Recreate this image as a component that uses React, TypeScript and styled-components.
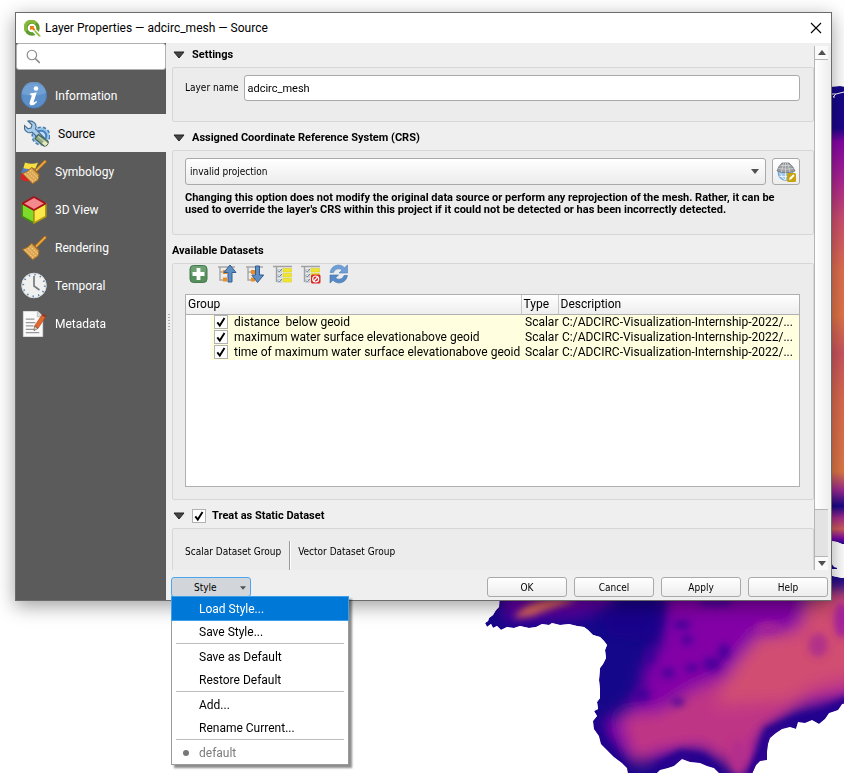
import React, { useState } from 'react';
import styled, { createGlobalStyle, css } from 'styled-components';

const UI = "Roboto, 'Noto Sans', sans-serif";
const SMALL = "'DejaVu Sans Condensed', 'DejaVu Sans', sans-serif";

const GlobalStyle = createGlobalStyle`
  *, *::before, *::after { box-sizing: border-box; }
  body { margin: 0; background: #fff; color: #000; font: 12px/16px ${UI}; }
  button, input, select { font: inherit; color: inherit; margin: 0; }
`;

/* ---------- window frame ---------- */

const Page = styled.div`
  position: relative;
  height: 100vh;
  min-height: 500px;
  overflow: hidden;
  padding: 12px 12px 172px 15px;
`;

const MapCanvas = styled.svg`
  position: absolute;
  inset: 0;
  width: 100%;
  height: 100%;
`;

const Dialog = styled.main`
  position: relative;
  display: flex;
  flex-direction: column;
  height: 100%;
  background: #efefef;
  border: 1px solid #6b6b6b;
  box-shadow: 0 5px 18px rgba(0, 0, 0, 0.38);
`;

const TitleBar = styled.header`
  display: flex;
  align-items: center;
  flex: none;
  height: 30px;
  padding: 0 8px;
  gap: 4px;
  background: #fff;
`;

const Title = styled.h1`
  flex: 1;
  margin: 0;
  font-size: 12px;
  font-weight: 400;
`;

const CloseButton = styled.button`
  display: flex;
  padding: 1px;
  border: 0;
  background: none;
`;

const Body = styled.div`
  display: flex;
  flex: 1;
  min-height: 0;
`;

/* ---------- sidebar ---------- */

const Sidebar = styled.nav`
  flex: none;
  width: 150px;
  background: #5b5b5b;
`;

const SearchBox = styled.label`
  display: flex;
  align-items: center;
  height: 27px;
  margin-bottom: 6px;
  padding: 0 9px;
  gap: 6px;
  background: #fff;
  border: 1px solid #b0b0b0;
  border-radius: 3px;
`;

const SearchInput = styled.input`
  width: 100%;
  min-width: 0;
  border: 0;
  outline: 0;
  background: transparent;
`;

const NavItem = styled.button<{ $active?: boolean }>`
  display: flex;
  align-items: center;
  gap: 8px;
  width: 100%;
  height: 38px;
  padding: 2px 0 0 ${p => (p.$active ? 8 : 5)}px;
  border: 0;
  text-align: left;
  background: ${p => (p.$active ? '#efefef' : 'transparent')};
  color: ${p => (p.$active ? '#000' : '#fff')};
`;

/* ---------- content ---------- */

const Main = styled.div`
  display: flex;
  flex-direction: column;
  flex: 1;
  min-width: 0;
`;

const ScrollArea = styled.div`
  display: flex;
  flex: 1;
  min-height: 0;
  margin-right: 3px;
`;

const Splitter = styled.div`
  flex: none;
  align-self: center;
  width: 2px;
  height: 17px;
  margin: 32px 2px 0;
  background: repeating-linear-gradient(#b0b0b0 0 1px, transparent 1px 3px);
`;

const Content = styled.div`
  flex: 1;
  min-width: 0;
  overflow: hidden;
  font: 10px/12px ${SMALL};
`;

const GroupTitle = styled.h2<{ $flush?: boolean }>`
  display: flex;
  align-items: center;
  gap: 7px;
  height: ${p => (p.$flush ? 28 : 24)}px;
  margin: 0;
  padding: ${p => (p.$flush ? '4px 0 0' : '0 0 0 1px')};
  font: 700 11px/14px ${UI};
`;

const GroupBox = styled.section<{ $height: number; $after?: number; $tight?: boolean }>`
  height: ${p => p.$height}px;
  margin-bottom: ${p => p.$after ?? 0}px;
  padding: ${p => (p.$tight ? 0 : 7)}px 13px 0 12px;
  background: #ececec;
  border: 1px solid #d6d6d6;
  border-radius: 2px;
`;

const FieldRow = styled.div`
  display: flex;
  align-items: center;
  gap: 6px;
`;

const TextInput = styled.input`
  flex: 1;
  min-width: 0;
  height: 26px;
  padding: 0 2px;
  font: 11px/18px ${UI};
  background: #fff;
  border: 1px solid #a9a9a9;
  border-radius: 3px;
`;

const SelectWrap = styled.div`
  position: relative;
  display: flex;
  flex: 1;
`;

const Select = styled.select`
  width: 100%;
  height: 27px;
  padding: 0 4px;
  appearance: none;
  background: linear-gradient(#fff, #ececec);
  border: 1px solid #a9a9a9;
  border-radius: 3px;
`;

const SelectArrow = styled.span`
  position: absolute;
  right: 7px;
  top: 11px;
  display: flex;
  pointer-events: none;
`;

const IconButton = styled.button`
  display: flex;
  align-items: center;
  justify-content: center;
  width: 28px;
  height: 27px;
  padding: 0;
  background: linear-gradient(#fff, #ededed);
  border: 1px solid #a9a9a9;
  border-radius: 3px;
`;

const Note = styled.p`
  margin: 7px 0 0;
  font: 700 11px/12px ${UI};
`;

const Toolbar = styled.div`
  display: flex;
  gap: 8px;
  height: 30px;
  padding-left: 4px;
`;

const ToolButton = styled.button`
  display: flex;
  width: 20px;
  height: 20px;
  padding: 0;
  border: 0;
  background: none;
`;

const TableFrame = styled.div`
  height: 193px;
  background: #fff;
  border: 1px solid #b0b0b0;
  overflow: hidden;
`;

const Table = styled.table`
  width: 100%;
  table-layout: fixed;
  border-collapse: collapse;
  font: 12px/15px ${UI};
`;

const HeadCell = styled.th<{ $width?: number }>`
  width: ${p => (p.$width ? `${p.$width}px` : 'auto')};
  height: 19px;
  padding: 0 2px;
  font-weight: 400;
  text-align: left;
  background: linear-gradient(#fff, #ededed);
  border-bottom: 1px solid #b0b0b0;
  & + & { border-left: 1px solid #c8c8c8; }
`;

const Cell = styled.td<{ $tree?: boolean }>`
  height: 15px;
  padding: ${p => (p.$tree ? '0 0 0 25px' : '0 0 0 4px')};
  white-space: pre;
  background: ${p => (p.$tree ? 'linear-gradient(to right, #fff 25px, #ffffdf 25px)' : '#ffffdf')};
`;

const CheckLabel = styled.label<{ $indent?: number }>`
  display: flex;
  align-items: center;
  gap: 6px;
  padding-left: ${p => p.$indent ?? 0}px;
`;

const Check = styled.input`
  appearance: none;
  flex: none;
  width: 14px;
  height: 14px;
  background: #fff;
  border: 1px solid #b2b2b2;
  &:checked {
    background: #fff url("data:image/svg+xml,%3Csvg xmlns='http://www.w3.org/2000/svg' viewBox='0 0 12 12'%3E%3Cpath d='M2.3 6.3 4.8 9.5 9.5 2' fill='none' stroke='%23000' stroke-width='1.9'/%3E%3C/svg%3E") center / 12px 12px no-repeat;
  }
`;

const DatasetColumns = styled.div`
  display: flex;
  height: 60px;
  margin-top: 5px;
`;

const DatasetColumn = styled.div`
  padding: 5px 8px 0 0;
  & + & { padding-left: 8px; border-left: 1px solid #9a9a9a; box-shadow: inset 1px 0 #fff; }
`;

/* ---------- scroll bar ---------- */

const ScrollBar = styled.div`
  display: flex;
  flex-direction: column;
  flex: none;
  width: 14px;
  margin-top: 3px;
  background: #e3e3e3;
  border-left: 1px solid #b5b5b5;
`;

const ScrollArrow = styled.button`
  display: flex;
  align-items: center;
  justify-content: center;
  flex: none;
  width: 100%;
  height: 13px;
  padding: 0;
  border: 0;
  background: #fafafa;
`;

const ScrollTrack = styled.div`
  flex: 1;
  padding-bottom: 46px;
  border-bottom: 1px solid #b5b5b5;
`;

const ScrollThumb = styled.div`
  height: 100%;
  background: linear-gradient(to right, #fff, #f0f0f0);
  border: solid #b5b5b5;
  border-width: 1px 0;
`;

/* ---------- footer ---------- */

const Footer = styled.footer`
  display: flex;
  flex: none;
  gap: 7px;
  padding: 7px 3px 3px 5px;
  font: 10px/12px ${SMALL};
`;

const pushButton = css`
  width: 80px;
  height: 20px;
  padding: 1px 0 0;
  border-radius: 3px;
`;

const PushButton = styled.button`
  ${pushButton}
  background: linear-gradient(#fff, #ededed);
  border: 1px solid #a9a9a9;
`;

const MenuAnchor = styled.div`
  position: relative;
  margin-right: auto;
`;

const StyleButton = styled.button`
  ${pushButton}
  display: flex;
  align-items: center;
  padding: 1px 4px 0 22px;
  justify-content: space-between;
  background: #d2d6da;
  border: 1px solid #4da6f0;
`;

const Menu = styled.div`
  position: absolute;
  z-index: 2;
  top: 19px;
  left: 0;
  width: 178px;
  background: #fff;
  border: 1px solid #9b9b9b;
  box-shadow: 3px 3px 2px rgba(0, 0, 0, 0.45);
  font: 12px/16px ${UI};
`;

const MenuItem = styled.button<{ $active?: boolean }>`
  display: flex;
  align-items: center;
  width: 100%;
  height: 23px;
  padding: 0;
  border: 0;
  text-align: left;
  color: ${p => (p.$active ? '#fff' : '#000')};
  background: ${p => (p.$active ? '#0078d7' : 'transparent')};
  box-shadow: ${p => (p.$active ? '0 0 0 1px #3f9fe8' : 'none')};
  &:disabled { color: #7b7b7b; }
`;

const MenuMark = styled.span`
  display: flex;
  justify-content: center;
  width: 27px;
`;

const MenuRule = styled.hr`
  height: 2px;
  margin: 0 4px;
  border: 0;
  border-top: 1px solid #bdbdbd;
`;

/* ---------- icons ---------- */

const Triangle = ({ size = 9, up = false, color = '#505050' }: { size?: number; up?: boolean; color?: string }) => (
  <svg width={size} height={Math.round(size * 0.6)} viewBox="0 0 10 6">
    <path d={up ? 'M0 6h10L5 0z' : 'M0 0h10L5 6z'} fill={color} />
  </svg>
);

const Collapse = () => (
  <svg width="12" height="8" viewBox="0 0 12 8">
    <path d="M1 1h10L6 7z" fill="#454545" stroke="#222" />
  </svg>
);

const QgisLogo = () => (
  <svg width="17" height="17" viewBox="0 0 17 17">
    <circle cx="8" cy="8" r="6" fill="none" stroke="#5e9b2c" strokeWidth="3.4" />
    <path d="M2.5 11A6 6 0 0 1 12 3.5" fill="none" stroke="#86b83b" strokeWidth="3.2" />
    <path d="M9.5 9.5 14.5 15" stroke="#fff" strokeWidth="4.5" />
    <path d="M10.5 11.5v-2l6 6V16.5h-1.8z" fill="#8fbd38" />
    <path d="M6 6h4.2L9.6 7.6l1.7 2-1.4 1.2-2-1.7L6 10z" fill="#ee7913" />
  </svg>
);

const SearchIcon = () => (
  <svg width="17" height="17" viewBox="0 0 16 16" fill="none" stroke="#888">
    <circle cx="6.6" cy="6.3" r="5.3" strokeWidth="1.3" />
    <path d="m10.4 10.2 5 5" strokeWidth="1.8" />
  </svg>
);

const InfoIcon = () => (
  <svg width="26" height="28" viewBox="0 0 26 28">
    <circle cx="13" cy="13.5" r="12.6" fill="#5b8fc9" stroke="#4a7db8" />
    <path d="M1 12a12 12 0 0 1 24-1Q14 16 1 12z" fill="#79a7d8" opacity=".7" />
    <circle cx="15" cy="6.5" r="2.3" fill="#fff" />
    <path d="M9 11.4q3.5-.3 6.7-1.2l-3 9.8q-.3 1.4 2.7-.9l.7.8q-3.5 4-6.2 3.3-2-.6-1-3.7l1.7-5.3q.5-1.5-1.9-1.6z" fill="#fff" />
  </svg>
);

const SourceIcon = () => (
  <svg width="26" height="28" viewBox="0 0 26 28">
    <circle cx="17" cy="16" r="8.5" fill="#8fbbe4" stroke="#4a7dae" strokeWidth="2.2" strokeDasharray="3.2 2" />
    <circle cx="17" cy="16" r="8" fill="#9dc6ea" />
    <circle cx="17" cy="16" r="5.3" fill="#c5dff5" stroke="#4581c0" strokeWidth="2" />
    <path d="m4 1 4 4-1 3-3 .7L.6 5.5Q-.4 11 4.2 12.5q2 .6 4-.4l9 8.7 3-3-8.7-8.8q1.4-3-.7-5.8Q7.7.3 4 1z" fill="#a9cdec" stroke="#466b8d" strokeWidth="1.1" />
    <path d="m14.4 14.5 8.8 6.3q2 1.5 0 3.9t-4 .8l-8.2-6.8z" fill="#8fab8a" stroke="#47614d" strokeWidth="1.1" />
    <path d="m14 16.3 6 4.6M20.5 21l3 2.5-2.2 2.2-3-2.5z" stroke="#dce8bf" fill="#eceabf" strokeWidth=".8" />
  </svg>
);

const Broom = ({ flag = false }: { flag?: boolean }) => (
  <svg width="26" height="26" viewBox="1 1 26 26">
    {flag && (
      <g>
        <path d="M5 4.5q7 2.5 13 0l-3 7q-6 2-12 0z" fill="#f7df3f" />
        <path d="M3 10q6 2 12 0l-3 6q-6 1-11-1z" fill="#537dbb" />
        <path d="M1.5 15q5 2 11 1l-2 7q-6 1-10.5-2z" fill="#dc2222" />
      </g>
    )}
    <path d="M16.5 12 25 3.5" stroke="#98601c" strokeWidth="3.4" strokeLinecap="round" />
    <path d="M16.5 12 25 3.5" stroke="#eaa63e" strokeWidth="2" strokeLinecap="round" />
    <path d="M11.5 9.5 19 17l-1 5-5.5 3.7L2.5 15.5q5-1.2 9-6z" fill="#dba450" stroke="#a66d24" />
    <path d="m5 15.5 8.7 8.5m-6-10 8.3 8.2m-6-10 8 7.8" stroke="#f2cd87" strokeWidth="1.1" strokeDasharray="1.5 1" />
    <path d="m12 9.7 7 7" stroke="#a9712a" strokeWidth="1.2" />
  </svg>
);

const CubeIcon = () => (
  <svg width="26" height="28" viewBox="0 0 26 28" strokeLinejoin="round" strokeWidth="1.6">
    <path d="M1.2 7.5 13 14v13L1.2 20.5z" fill="#7edb2c" stroke="#478d12" />
    <path d="M24.8 7.5 13 14v13l11.8-6.5z" fill="#fbe94a" stroke="#b39a11" />
    <path d="M13 1 24.5 7.5 13 14 1.5 7.5z" fill="#f38a8d" stroke="#a80f18" />
  </svg>
);

const ClockIcon = () => (
  <svg width="26" height="28" viewBox="0 0 26 28">
    <circle cx="13" cy="13.5" r="12.3" fill="#f1f2f0" stroke="#d6dadd" />
    <circle cx="13" cy="13.5" r="10.8" fill="none" stroke="#5d86b6" strokeWidth="1.8" strokeDasharray="1.4 4.255" />
    <path d="M13 4v10l5.5 4" fill="none" stroke="#777c80" strokeWidth="1.7" />
  </svg>
);

const MetadataIcon = () => (
  <svg width="26" height="28" viewBox="1 0 27 28">
    <path d="M3.5 1h15l5 5v21h-20z" fill="#fafafa" stroke="#ddd" />
    <path d="M18 1v5.5h5.5" fill="#ddd" stroke="#bbb" />
    <path d="M6 9h9M6 12.5h10M6 16h8M6 19.5h9M6 23h14" stroke="#999" strokeWidth="1.3" />
    <path d="m22.5 5 3.7 2-7.5 11.5-3.7-2.2z" fill="#e2682b" stroke="#b1481a" strokeWidth=".7" />
    <path d="m22.5 5 1.2-1.7 3.8 2L26.2 7z" fill="#8f3c23" />
    <path d="m15 16.3 3.7 2.2L14.5 21z" fill="#e9d4ae" stroke="#444" strokeWidth=".6" />
  </svg>
);

const GlobeIcon = () => (
  <svg width="20" height="20" viewBox="0 0 20 20">
    <circle cx="9.5" cy="11" r="7.3" fill="#9fc9ee" stroke="#6a9dcc" />
    <path d="M5 12q1 4 4 6M9.5 11v7M13 12q0 3-2 6M3.5 14.5h12" fill="none" stroke="#fff" strokeWidth=".7" />
    <path d="M6 1h7q4 3 6 8-9 3.5-18 0 1.5-5 5-8z" fill="#9b9fa2" stroke="#717579" strokeWidth=".8" />
    <path d="M4.5 3.5h10M2.5 6.5q7 1.5 15 0M7.5 1 5.5 10M9.5 1v10M11.5 1l2.5 9" fill="none" stroke="#e4e4e4" strokeWidth=".6" />
    <rect x="11" y="11" width="9" height="9" rx="1.5" fill="#c9a30d" />
    <path d="m13 18 .7-2.3 3.6-3.4 1.3 1.4-3.5 3.5z" fill="#fff" />
  </svg>
);

const PlusIcon = () => (
  <svg width="20" height="20" viewBox="0 0 20 20">
    <rect x="1" y="1.5" width="17" height="17" rx="3.5" fill="#55905c" stroke="#47794e" />
    <path d="M2 10V5q0-3 3-3h9q3 0 3 3v3z" fill="#7eae81" opacity=".6" />
    <path d="M9.5 4v12M3.5 10h12" stroke="#fff" strokeWidth="3.8" />
  </svg>
);

const TreeArrowIcon = ({ down = false }: { down?: boolean }) => (
  <svg width="20" height="20" viewBox="0 0 20 20">
    <path d="M1 3h17M3 3v13h4M3 8h4" fill="none" stroke="#a7a7a7" strokeWidth="1.4" />
    <rect x="6" y="6" width="4" height="4" fill="#f18b1d" />
    <rect x="6" y="13.5" width="4" height="4" fill="#f18b1d" />
    <path
      d={down ? 'M10.5 2h4v9h4.2l-6.2 7.5L6.8 11h3.7z' : 'M11 18v-9.5H7L13 1l6 7.5h-4V18z'}
      fill="#5d8ec4"
      stroke="#355e8c"
    />
  </svg>
);

const ChecksIcon = ({ off = false }: { off?: boolean }) => (
  <svg width="20" height="20" viewBox="0 0 20 20">
    <path d="M0 2.5h19M3.5 3v15" stroke="#a0a0a0" strokeWidth="1.4" />
    <path d="M4.5 5.5h4v3h-4zm0 5h4v3h-4zm0 5h4v3h-4z" fill="#e7edf2" stroke="#aab6c0" strokeWidth=".5" />
    <path d="m5 6.5 1.3 1.5L9 4.8M5 11.5 6.3 13 9 9.8M5 16.5 6.3 18 9 14.8" fill="none" stroke="#6b8297" />
    <path d="M10 4.5h8.5v3.5H10zm0 5h8.5v3.5H10zm0 5h8.5v3.5H10z" fill="#f0e72c" stroke="#d8cc2a" strokeWidth=".6" />
    {off && (
      <g>
        <rect x="10" y="10.5" width="9.5" height="9" rx="1.5" fill="#d8262b" />
        <circle cx="14.7" cy="15" r="3" fill="none" stroke="#fff" strokeWidth="1.2" />
        <path d="m12.7 17 4-4" stroke="#fff" strokeWidth="1.2" />
      </g>
    )}
  </svg>
);

const RefreshIcon = () => (
  <svg width="20" height="20" viewBox="0 0 20 20">
    <path d="M1 8.5Q2.5 1.5 9.5 1q3.6 0 6 2.7L18.5 1v8H10l3-2.9Q11.5 4.5 9 4.8 5.5 5 4.5 8.5z" fill="#6f9fd5" stroke="#4c80bb" strokeWidth=".6" />
    <path d="M18.5 11.5Q17 18.5 10 19q-3.6 0-6-2.7L1 19v-8h8.5l-3 2.9q1.5 1.6 4 1.3 3.5-.2 4.5-3.7z" fill="#5689c5" stroke="#3d70ad" strokeWidth=".6" />
  </svg>
);

/* ---------- mesh map ---------- */

const COAST =
  'M500 595 499 607 496 610 493 615 489 618 488 621 485 623 487 627 491 624 493 628 497 626 501 630 507 627 514 628 520 626 529 628 536 627 542 624 549 625 552 623 560 625 569 624 577 626 584 627 588 630 593 635 600 637 604 641 607 645 605 650 606 658 603 664 600 668 599 680 600 690 600 698 597 702 598 709 594 711 597 716 593 721 594 729 599 736 601 744 607 750 614 757 622 763 627 768 628 774H656L660 770 668 768 674 766 682 759 690 762 700 763 707 766 714 768 720 774H752L756 765 760 761 767 760 767 752 768 744 770 738 776 733 782 729 790 727 796 729 798 722 805 723 812 720 819 724 825 719 829 713 838 710 842 704 850 702V577L842 578 828 575V595z';
const STRIP = 'M826 87 840 86 850 87V545L842 544 837 542 826 540z';
const SPOTS: [number, number, number, number][] = [
  [687, 640, 6, 5], [712, 664, 9, 7], [692, 668, 7, 4], [668, 673, 7, 5], [678, 702, 7, 4],
  [650, 655, 5, 10], [642, 695, 9, 7], [724, 652, 6, 8], [682, 625, 9, 5], [716, 603, 18, 4],
];

const MeshMap = () => (
  <MapCanvas viewBox="0 0 844 773" preserveAspectRatio="xMaxYMin slice" aria-hidden="true">
    <defs>
      <clipPath id="coast"><path d={COAST} /></clipPath>
      <clipPath id="strip"><path d={STRIP} /></clipPath>
      <filter id="soft" x="-50%" y="-50%" width="200%" height="200%"><feGaussianBlur stdDeviation="8" /></filter>
      <filter id="fine" x="-50%" y="-50%" width="200%" height="200%"><feGaussianBlur stdDeviation="3.5" /></filter>
      <linearGradient id="depth" x1="0" y1="87" x2="0" y2="545" gradientUnits="userSpaceOnUse">
        <stop offset="0" stopColor="#150789" />
        <stop offset=".09" stopColor="#1c068b" />
        <stop offset=".12" stopColor="#8606a6" />
        <stop offset=".2" stopColor="#ab2494" />
        <stop offset=".29" stopColor="#cf4f70" />
        <stop offset=".4" stopColor="#e07050" />
        <stop offset=".5" stopColor="#e27549" />
        <stop offset=".58" stopColor="#cb5660" />
        <stop offset=".68" stopColor="#dc6b50" />
        <stop offset=".84" stopColor="#df7847" />
        <stop offset=".88" stopColor="#9c2a90" />
        <stop offset=".915" stopColor="#190789" />
        <stop offset=".94" stopColor="#a02a8c" />
        <stop offset=".965" stopColor="#cf5d5a" />
        <stop offset=".985" stopColor="#7d0ba5" />
        <stop offset="1" stopColor="#150789" />
      </linearGradient>
    </defs>
    <g clipPath="url(#strip)">
      <path d={STRIP} fill="url(#depth)" />
      <path d="M832 94h4l-3 3h2M836 94l8-2" fill="none" stroke="#fff" />
    </g>
    <path d="M831 563 834 567 837 568V569H831z" fill="#150789" />
    <g clipPath="url(#coast)">
      <path d={COAST} fill="#150789" />
      <g filter="url(#soft)">
        <path d="M500 580H625L612 606 580 617 505 621z" fill="#6503a4" />
        <path d="M665 590H860V700L800 710 766 735 755 780 700 752 655 762 625 760 600 725 625 710 640 690 645 665 660 645z" fill="#8305a7" />
        <path d="M620 715 660 712 690 692 730 675 765 640 800 625 810 590H860V690L810 700 785 715 758 735 745 775 700 745 660 750 635 765z" fill="#bf3685" />
        <path d="M715 705 735 665 760 635 800 635 812 590H860V675L815 685 790 700z" fill="#d14e72" />
      </g>
      <g filter="url(#fine)">
        <path d="M514 618Q525 600 560 598L578 600Q545 610 532 616z" fill="#d9655a" />
        <path d="M600 616 625 600 665 600 664 625 655 645 640 640 612 636z" fill="#1d068b" opacity=".7" />
        <ellipse cx="768" cy="628" rx="12" ry="6" fill="#a3209a" />
        <ellipse cx="818" cy="645" rx="10" ry="12" fill="#b23089" />
        <ellipse cx="842" cy="620" rx="8" ry="18" fill="#a3239a" />
        <ellipse cx="738" cy="757" rx="8" ry="18" fill="#b42d8d" />
        {SPOTS.map(([cx, cy, rx, ry]) => (
          <ellipse key={`${cx}-${cy}`} cx={cx} cy={cy} rx={rx} ry={ry} fill="#380398" opacity=".75" />
        ))}
        <path d="M850 700 820 716 797 719 768 731 760 756 748 776M720 773 702 758 681 754 656 769M628 773 602 742 594 722" fill="none" stroke="#24058e" strokeWidth="9" />
      </g>
    </g>
  </MapCanvas>
);

/* ---------- data ---------- */

const NAV: [string, React.ReactNode][] = [
  ['Information', <InfoIcon />],
  ['Source', <SourceIcon />],
  ['Symbology', <Broom flag />],
  ['3D View', <CubeIcon />],
  ['Rendering', <Broom />],
  ['Temporal', <ClockIcon />],
  ['Metadata', <MetadataIcon />],
];

const TOOLS: [string, React.ReactNode][] = [
  ['Assign extra dataset', <PlusIcon />],
  ['Collapse all', <TreeArrowIcon />],
  ['Expand all', <TreeArrowIcon down />],
  ['Check all', <ChecksIcon />],
  ['Uncheck all', <ChecksIcon off />],
  ['Reset to defaults', <RefreshIcon />],
];

const DATASETS = [
  'distance  below geoid',
  'maximum water surface elevationabove geoid',
  'time of maximum water surface elevationabove geoid',
];

export default function App() {
  const [page, setPage] = useState('Source');
  return (
    <Page>
      <GlobalStyle />
      <MeshMap />
      <Dialog>
        <TitleBar>
          <QgisLogo />
          <Title>Layer Properties — adcirc_mesh — Source</Title>
          <CloseButton aria-label="Close">
            <svg width="12" height="12" viewBox="0 0 12 12"><path d="m1 1 10 10M11 1 1 11" stroke="#000" strokeWidth="1.1" /></svg>
          </CloseButton>
        </TitleBar>
        <Body>
          <Sidebar>
            <SearchBox>
              <SearchIcon />
              <SearchInput type="text" aria-label="Search" />
            </SearchBox>
            {NAV.map(([label, icon]) => (
              <NavItem key={label} $active={label === page} onClick={() => setPage(label)}>
                {icon}
                {label}
              </NavItem>
            ))}
          </Sidebar>
          <Main>
            <ScrollArea>
              <Splitter />
              <Content>
                <GroupTitle><Collapse />Settings</GroupTitle>
                <GroupBox $height={55} $after={4}>
                  <FieldRow>
                    <label htmlFor="layer-name">Layer name</label>
                    <TextInput id="layer-name" type="text" defaultValue="adcirc_mesh" />
                  </FieldRow>
                </GroupBox>
                <GroupTitle><Collapse />Assigned Coordinate Reference System (CRS)</GroupTitle>
                <GroupBox $height={85}>
                  <FieldRow>
                    <SelectWrap>
                      <Select aria-label="Coordinate reference system">
                        <option>invalid projection</option>
                      </Select>
                      <SelectArrow><Triangle size={8} /></SelectArrow>
                    </SelectWrap>
                    <IconButton aria-label="Select CRS"><GlobeIcon /></IconButton>
                  </FieldRow>
                  <Note>
                    Changing this option does not modify the original data source or perform any reprojection of the mesh. Rather, it can be
                    used to override the layer's CRS within this project if it could not be detected or has been incorrectly detected.
                  </Note>
                </GroupBox>
                <GroupTitle $flush>Available Datasets</GroupTitle>
                <GroupBox $height={237} $after={4} $tight>
                  <Toolbar>
                    {TOOLS.map(([label, icon]) => (
                      <ToolButton key={label} aria-label={label}>{icon}</ToolButton>
                    ))}
                  </Toolbar>
                  <TableFrame>
                    <Table>
                      <thead>
                        <tr>
                          <HeadCell>Group</HeadCell>
                          <HeadCell $width={37}>Type</HeadCell>
                          <HeadCell $width={241}>Description</HeadCell>
                        </tr>
                      </thead>
                      <tbody>
                        {DATASETS.map(name => (
                          <tr key={name}>
                            <Cell $tree>
                              <CheckLabel $indent={3}>
                                <Check type="checkbox" defaultChecked />
                                {name}
                              </CheckLabel>
                            </Cell>
                            <Cell>Scalar</Cell>
                            <Cell>C:/ADCIRC-Visualization-Internship-2022/...</Cell>
                          </tr>
                        ))}
                      </tbody>
                    </Table>
                  </TableFrame>
                </GroupBox>
                <GroupTitle>
                  <Collapse />
                  <CheckLabel>
                    <Check type="checkbox" defaultChecked />
                    Treat as Static Dataset
                  </CheckLabel>
                </GroupTitle>
                <GroupBox $height={120}>
                  <DatasetColumns>
                    <DatasetColumn>Scalar Dataset Group</DatasetColumn>
                    <DatasetColumn>Vector Dataset Group</DatasetColumn>
                  </DatasetColumns>
                </GroupBox>
              </Content>
              <ScrollBar>
                <ScrollArrow aria-label="Scroll up"><Triangle size={8} up /></ScrollArrow>
                <ScrollTrack><ScrollThumb /></ScrollTrack>
                <ScrollArrow aria-label="Scroll down"><Triangle size={8} /></ScrollArrow>
              </ScrollBar>
            </ScrollArea>
            <Footer>
              <MenuAnchor>
                <StyleButton aria-haspopup="menu" aria-expanded="true">
                  Style
                  <Triangle size={6} />
                </StyleButton>
                <Menu role="menu">
                  <MenuItem role="menuitem" $active><MenuMark />Load Style...</MenuItem>
                  <MenuItem role="menuitem"><MenuMark />Save Style...</MenuItem>
                  <MenuRule />
                  <MenuItem role="menuitem"><MenuMark />Save as Default</MenuItem>
                  <MenuItem role="menuitem"><MenuMark />Restore Default</MenuItem>
                  <MenuRule />
                  <MenuItem role="menuitem"><MenuMark />Add...</MenuItem>
                  <MenuItem role="menuitem"><MenuMark />Rename Current...</MenuItem>
                  <MenuRule />
                  <MenuItem role="menuitem" disabled>
                    <MenuMark><svg width="6" height="6" viewBox="0 0 6 6"><circle cx="3" cy="3" r="3" fill="#777" /></svg></MenuMark>
                    default
                  </MenuItem>
                </Menu>
              </MenuAnchor>
              <PushButton>OK</PushButton>
              <PushButton>Cancel</PushButton>
              <PushButton>Apply</PushButton>
              <PushButton>Help</PushButton>
            </Footer>
          </Main>
        </Body>
      </Dialog>
    </Page>
  );
}
